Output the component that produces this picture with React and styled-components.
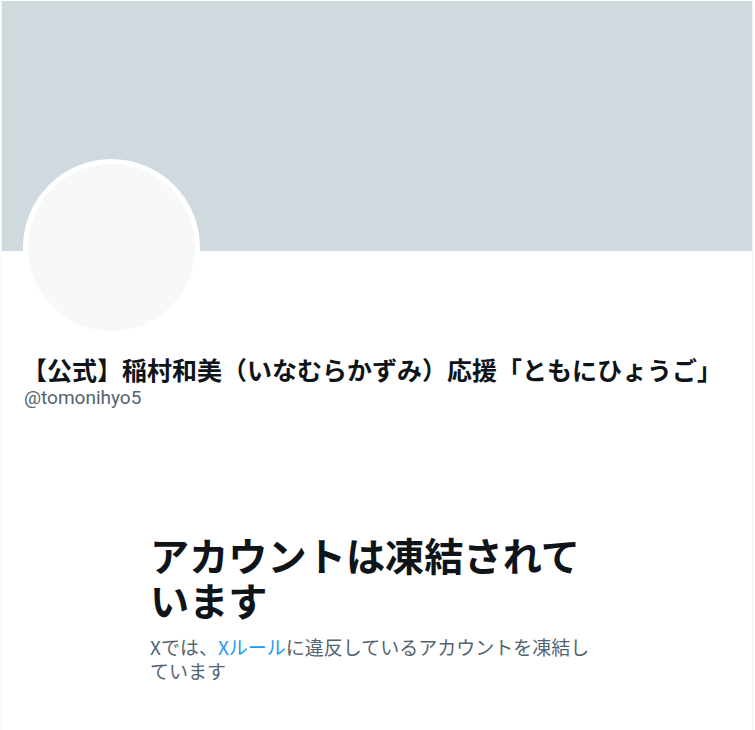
import React from "react";
import styled, { createGlobalStyle } from "styled-components";

const GlobalStyle = createGlobalStyle`
  html, body {
    margin: 0;
    padding: 0;
    background: #ffffff;
  }
  body {
    font-family: "Segoe UI", Roboto, "Noto Sans CJK JP", sans-serif;
    color: #0f1419;
  }
`;

const Column = styled.main`
  width: 750px;
  min-height: 729px;
  margin: 1px 0 0 1px;
  border-left: 1px solid #eff3f4;
  border-right: 1px solid #eff3f4;
  display: flex;
  flex-direction: column;
`;

const Banner = styled.div`
  height: 250px;
  background-color: #cfd9de;
`;

const ProfileHead = styled.div`
  padding: 0 20px;
  display: flex;
  flex-direction: column;
`;

const Avatar = styled.div`
  width: 167px;
  height: 167px;
  margin-top: -92px;
  margin-left: 1px;
  border: 5px solid #ffffff;
  border-radius: 50%;
  background-color: #f7f9f9;
`;

const Name = styled.h2`
  margin: 18px 0 0;
  font-family: "Noto Sans CJK JP", sans-serif;
  font-size: 25px;
  line-height: 31px;
  font-weight: 700;
  color: #0f1419;
  white-space: nowrap;
`;

const Handle = styled.div`
  margin-top: 1px;
  padding-left: 2px;
  font-size: 19px;
  line-height: 24px;
  color: #536471;
`;

const Notice = styled.section`
  width: 454px;
  margin: 122px auto 0;
  display: flex;
  flex-direction: column;
`;

const Title = styled.h1`
  margin: 0;
  font-family: "Noto Sans CJK JP", sans-serif;
  font-size: 39.2px;
  line-height: 45px;
  font-weight: 700;
  color: #0f1419;
`;

const Body = styled.p`
  margin: 13px 0 0;
  font-family: "Noto Sans CJK JP", sans-serif;
  font-size: 19px;
  line-height: 24px;
  font-weight: 400;
  color: #536471;
`;

const Link = styled.a`
  display: inline-block;
  color: #1d9bf0;
  text-decoration: none;
`;

export default function App() {
  return (
    <>
      <GlobalStyle />
      <Column>
        <Banner />
        <ProfileHead>
          <Avatar />
          <Name>【公式】稲村和美（いなむらかずみ）応援「ともにひょうご」</Name>
          <Handle>@tomonihyo5</Handle>
        </ProfileHead>
        <Notice>
          <Title>アカウントは凍結されています</Title>
          <Body>
            Xでは、<Link href="#">Xルール</Link>に違反しているアカウントを凍結しています
          </Body>
        </Notice>
      </Column>
    </>
  );
}
